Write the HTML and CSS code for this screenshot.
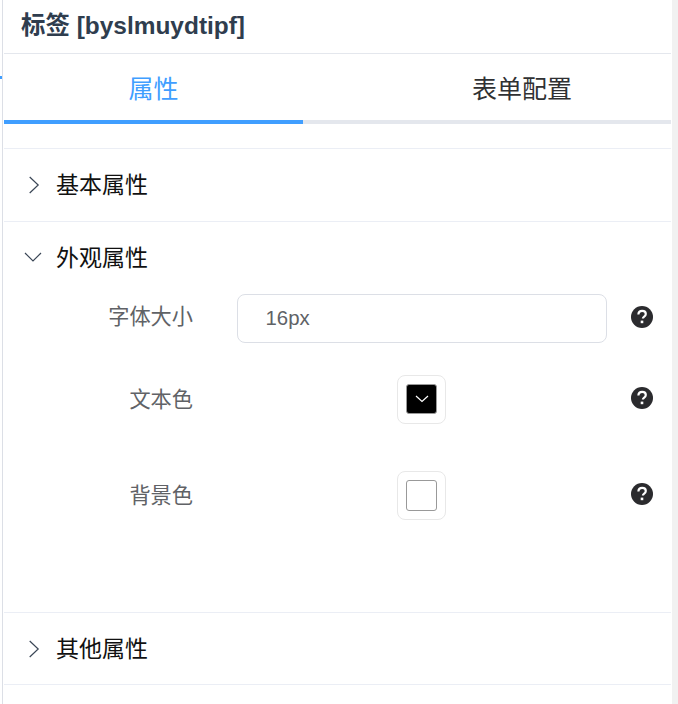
FILE: index.html
```html
<!DOCTYPE html>
<html lang="zh-CN">
<head>
<meta charset="utf-8">
<title>标签属性</title>
<link rel="stylesheet" href="styles.css">
</head>
<body>
<div class="tick"></div>
<div class="panel">
  <header class="title">标签 [byslmuydtipf]</header>
  <nav class="tabs">
    <div class="tab active">属性</div>
    <div class="tab">表单配置</div>
  </nav>
  <div class="track"><div class="bar"></div></div>
  <section class="group">
    <div class="group-head">
      <span class="chev"><svg width="14" height="20" viewBox="0 0 14 20"><path d="M2.7 2l8.5 8-8.5 8" class="stroke"/></svg></span>
      <span class="group-name">基本属性</span>
    </div>
  </section>
  <section class="group">
    <div class="group-head open">
      <span class="chev"><svg width="20" height="12" viewBox="0 0 20 12"><path d="M2 2l8 8 8-8" class="stroke"/></svg></span>
      <span class="group-name">外观属性</span>
    </div>
    <div class="form">
      <div class="row row-input">
        <label class="label">字体大小</label>
        <div class="control"><div class="input">16px</div></div>
        <svg class="help" viewBox="0 0 22 22"><circle cx="11" cy="11" r="11" fill="#2b2b2e"/><path d="M7.4 8.4c0-2.2 1.6-3.6 3.8-3.6 2.1 0 3.6 1.3 3.6 3.1 0 1.5-.9 2.2-1.9 2.9-.7.5-1 .8-1 1.7" fill="none" stroke="#fff" stroke-width="2.2"/><rect x="9.7" y="14.6" width="2.6" height="2.6" fill="#fff"/></svg>
      </div>
      <div class="row row-color">
        <label class="label">文本色</label>
        <div class="control center"><div class="picker"><div class="swatch dark"><svg width="14" height="8" viewBox="0 0 14 8"><path d="M1 1l6 5.5L13 1" fill="none" stroke="#fff" stroke-width="1.2"/></svg></div></div></div>
        <svg class="help" viewBox="0 0 22 22"><circle cx="11" cy="11" r="11" fill="#2b2b2e"/><path d="M7.4 8.4c0-2.2 1.6-3.6 3.8-3.6 2.1 0 3.6 1.3 3.6 3.1 0 1.5-.9 2.2-1.9 2.9-.7.5-1 .8-1 1.7" fill="none" stroke="#fff" stroke-width="2.2"/><rect x="9.7" y="14.6" width="2.6" height="2.6" fill="#fff"/></svg>
      </div>
      <div class="row row-color">
        <label class="label">背景色</label>
        <div class="control center"><div class="picker"><div class="swatch"></div></div></div>
        <svg class="help" viewBox="0 0 22 22"><circle cx="11" cy="11" r="11" fill="#2b2b2e"/><path d="M7.4 8.4c0-2.2 1.6-3.6 3.8-3.6 2.1 0 3.6 1.3 3.6 3.1 0 1.5-.9 2.2-1.9 2.9-.7.5-1 .8-1 1.7" fill="none" stroke="#fff" stroke-width="2.2"/><rect x="9.7" y="14.6" width="2.6" height="2.6" fill="#fff"/></svg>
      </div>
    </div>
  </section>
  <section class="group">
    <div class="group-head">
      <span class="chev"><svg width="14" height="20" viewBox="0 0 14 20"><path d="M2.7 2l8.5 8-8.5 8" class="stroke"/></svg></span>
      <span class="group-name">其他属性</span>
    </div>
  </section>
  <div class="end"></div>
</div>
</body>
</html>
```
FILE: styles.css
```css
* { box-sizing: border-box; }
html, body { margin: 0; height: 704px; overflow: hidden; background: #fff; }
body {
  font-family: "Liberation Sans", "Noto Sans CJK SC", sans-serif;
  padding-left: 2px;
  padding-right: 7px;
  background: linear-gradient(#f1f1f1, #f1f1f1) right / 6px 100% no-repeat, #fff;
}
.tick {
  position: absolute; left: 0; top: 76px;
  width: 2px; height: 3px; background: #409eff;
}
.panel {
  height: 704px;
  border-left: 1px solid #dcdfe6;
  padding-left: 1px;
}
.title {
  height: 54px;
  padding: 9px 0 0 17px;
  border-bottom: 1px solid #e4e7ed;
  font-size: 24.45px;
  line-height: 34px;
  font-weight: 700;
  color: #2f3d4e;
}
.tabs {
  display: grid;
  grid-template-columns: 299px 298px;
  justify-content: space-between;
  height: 66px;
}
.tab {
  text-align: center;
  font-size: 25px;
  line-height: 70px;
  color: #303133;
}
.tab.active { color: #409eff; }
.track { height: 4px; background: #e4e7ed; }
.bar { width: 299px; height: 4px; background: #409eff; }
.group { border-bottom: 1px solid #ebeef5; }
.track + .group { margin-top: 24px; border-top: 1px solid #ebeef5; }
.group-head {
  display: flex;
  align-items: center;
  height: 72px;
  padding-left: 52px;
  position: relative;
  font-size: 23px;
  color: #111;
}
.group:last-of-type .group-head { height: 71px; }
.group-name { margin-bottom: 4px; }
.chev {
  position: absolute;
  left: 23px; top: 50%;
  transform: translateY(-50%);
  display: flex;
}
.open .chev { left: 18.5px; top: 35px; }
.stroke { fill: none; stroke: #3a4656; stroke-width: 1.2; }
.form { height: 318px; }
.row {
  display: grid;
  grid-template-columns: 189px 370px 1fr;
  column-gap: 44px;
  align-items: start;
}
.form .row-input { height: 81px; }
.form .row-color { height: 96px; }
.label {
  text-align: right;
  font-size: 21.2px;
  line-height: 46px;
  color: #606266;
}
.row-color .label { line-height: 50px; }
.input {
  height: 49px;
  border: 1px solid #dcdfe6;
  border-radius: 8px;
  padding-left: 27.5px;
  font-size: 20.4px;
  line-height: 47px;
  color: #606266;
}
.center { display: flex; justify-content: center; }
.picker {
  width: 49px; height: 49px;
  margin-right: 1px;
  border: 1px solid #e8e8e8;
  border-radius: 8px;
  padding: 8px;
  display: flex;
}
.swatch {
  flex: 1;
  border: 1px solid #999;
  border-radius: 3px;
  display: flex;
  align-items: center;
  justify-content: center;
}
.swatch.dark { background: #000; margin-bottom: 1px; }
.help {
  width: 22px; height: 22px;
  margin: 12px 0 0 -20px;
}
```
